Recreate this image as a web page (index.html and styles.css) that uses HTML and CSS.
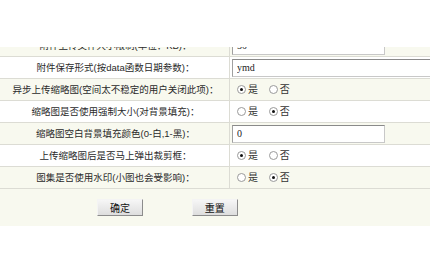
FILE: index.html
```html
<!DOCTYPE html>
<html lang="zh-CN">
<head>
    <meta charset="UTF-8">
    <title>系统参数设置</title>
    <link rel="stylesheet" href="styles.css">
</head>
<body>

    <div class="frame">
        <table class="settings">
            <tr class="alt">
                <td class="label">附件上传文件大小限制(单位：KB)：</td>
                <td class="value"><input class="text short" type="text" value="50"></td>
            </tr>
            <tr>
                <td class="label">附件保存形式(按data函数日期参数)：</td>
                <td class="value"><input class="text long" type="text" value="ymd"></td>
            </tr>
            <tr class="alt">
                <td class="label">异步上传缩略图(空间太不稳定的用户关闭此项)：</td>
                <td class="value">
                    <label><input type="radio" name="async" checked>是</label>
                    <label><input type="radio" name="async">否</label>
                </td>
            </tr>
            <tr>
                <td class="label">缩略图是否使用强制大小(对背景填充)：</td>
                <td class="value">
                    <label><input type="radio" name="force">是</label>
                    <label><input type="radio" name="force" checked>否</label>
                </td>
            </tr>
            <tr class="alt">
                <td class="label">缩略图空白背景填充颜色(0-白,1-黑)：</td>
                <td class="value"><input class="text short" type="text" value="0"></td>
            </tr>
            <tr>
                <td class="label">上传缩略图后是否马上弹出裁剪框：</td>
                <td class="value">
                    <label><input type="radio" name="crop" checked>是</label>
                    <label><input type="radio" name="crop">否</label>
                </td>
            </tr>
            <tr class="alt">
                <td class="label">图集是否使用水印(小图也会受影响)：</td>
                <td class="value">
                    <label><input type="radio" name="mark">是</label>
                    <label><input type="radio" name="mark" checked>否</label>
                </td>
            </tr>
            <tr class="alt">
                <td class="actions" colspan="2">
                    <button class="btn" type="submit">确定</button>
                    <button class="btn" type="reset">重置</button>
                </td>
            </tr>
        </table>
    </div>

</body>
</html>
```

FILE: styles.css
```css
body {
    margin: 0;
    padding: 0;
    background-color: #fff;
    color: #333;
    font-family: "Liberation Sans", "Noto Sans CJK SC", sans-serif;
    font-size: 10px;
}

/* page is scrolled, first row half hidden */
.frame {
    margin-top: 47px;
    overflow: hidden;
}

.settings {
    width: 100%;
    margin-top: -12px;
    border-collapse: collapse;
    table-layout: fixed;
}

.settings td {
    height: 21px;
    padding: 0;
    border-bottom: 1px solid #dcdcd4;
    line-height: 12px;
}

.settings tr.alt td {
    background-color: #f8f9ef;
}

.label {
    width: 227px;
    padding-left: 2px !important;
    text-align: center;
    border-right: 1px solid #dcdcd4;
    white-space: nowrap;
    font-size: 9.5px;
    color: #2a2a2a;
}

.value {
    padding-left: 2px !important;
    white-space: nowrap;
    overflow: hidden;
}

.text {
    box-sizing: border-box;
    height: 18px;
    margin: 0;
    padding: 0 4px;
    border: 1px solid #c8c8c8;
    border-top-color: #8a8a8a;
    border-left-color: #a0a0a0;
    background: #fff;
    font-family: "Liberation Serif", serif;
    font-size: 10px;
    color: #222;
    vertical-align: middle;
}

.short {
    width: 153px;
}

.long {
    width: 240px;
}

.value label {
    display: inline-flex;
    align-items: center;
    vertical-align: middle;
    margin-left: 5px;
    margin-right: 3px;
    font-size: 10px;
}

.value input[type="radio"] {
    appearance: none;
    width: 9px;
    height: 9px;
    margin: 0 2px 0 0;
    border: 1px solid #9a9a9a;
    border-radius: 50%;
    background: #fff;
    display: grid;
    place-content: center;
}

.value input[type="radio"]:checked::before {
    content: "";
    width: 3px;
    height: 3px;
    border-radius: 50%;
    background: #111;
}

.actions {
    height: 37px !important;
    padding-left: 97px !important;
    border-bottom: none !important;
}

.btn {
    width: 46px;
    height: 17px;
    margin: 0 46px 0 0;
    padding: 0;
    border: 1px solid #f4f4f4;
    border-right-color: #8c8c8c;
    border-bottom-color: #8c8c8c;
    background: linear-gradient(#f6f6f6, #dedede);
    font-family: "Noto Sans CJK SC", sans-serif;
    font-size: 10px;
    color: #111;
    line-height: 14px;
}
```
